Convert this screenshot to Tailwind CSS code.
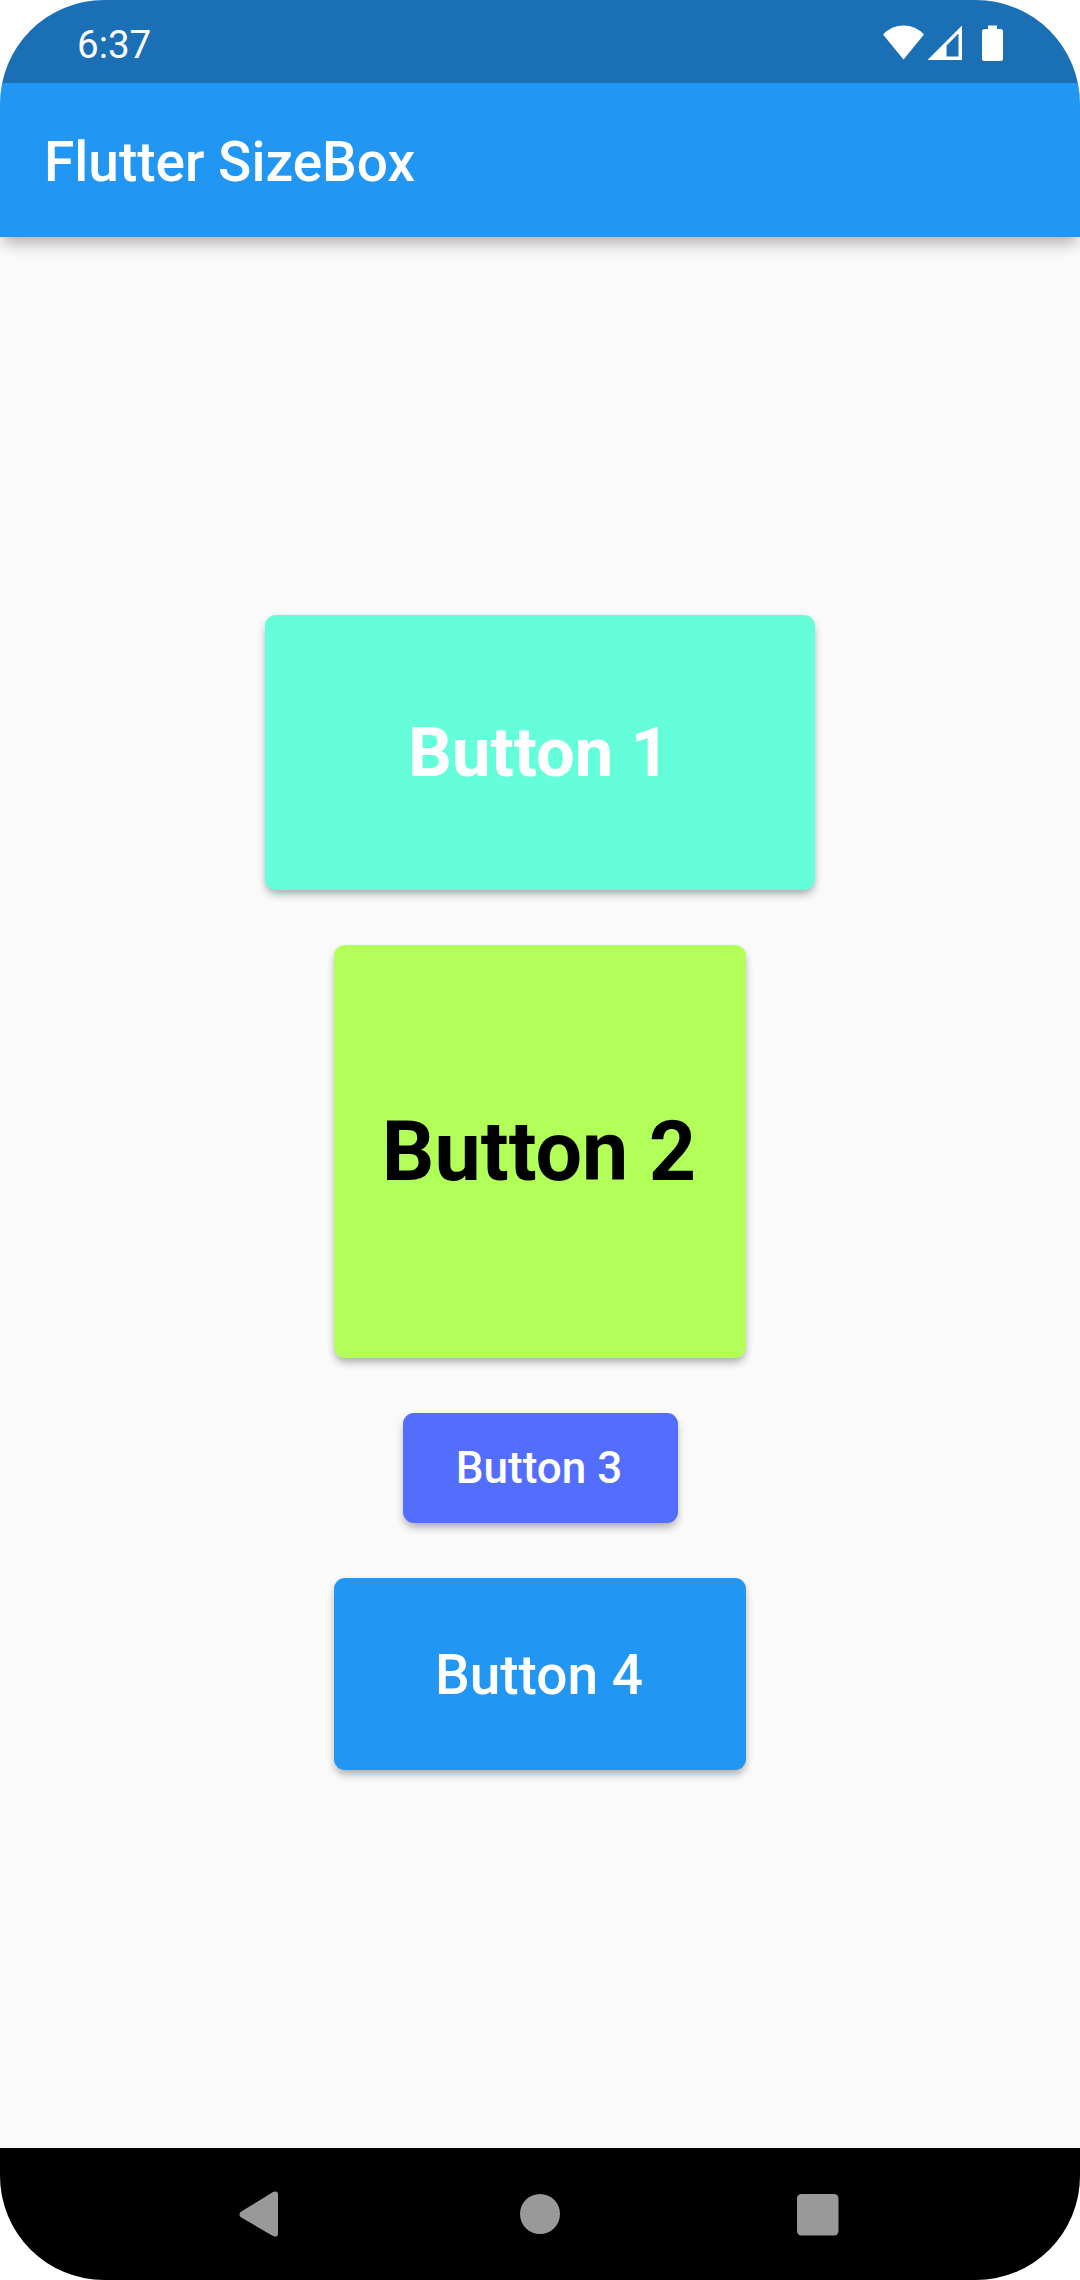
<!DOCTYPE html>
<html lang="en">
<head>
<meta charset="utf-8">
<title>Flutter SizeBox</title>
<script src="https://cdn.jsdelivr.net/npm/@tailwindcss/browser@4"></script>
</head>
<body class="bg-white">
<div class="w-[1080px] h-[2280px] rounded-[104px] overflow-hidden bg-[#fafafa] flex flex-col font-['Roboto',sans-serif]">
  <div class="relative shrink-0 shadow-[0_9px_16px_-4px_rgba(0,0,0,0.26),0_6px_16px_-2px_rgba(0,0,0,0.1)]">
    <div class="h-[83px] bg-[#1a6fb5] flex items-center justify-between pl-[77px] pr-[76px] text-white">
      <span class="text-[38.5px] leading-[46px] pt-[7px]">6:37</span>
      <svg class="w-[121px] h-[36px] mt-[3px]" viewBox="0 0 121 36" fill="#fff">
        <path d="M0 9.5Q8.500 0.500 20.500 0.500Q32.500 0.500 41 9.500L20.500 34.500Z"/>
        <path fill-rule="evenodd" d="M44.500 35L79 .5V35ZM63.500 20.500V31.500H75.500V8.500Z"/>
        <path d="M105 .5h9v3.500h3.500q2.500 0 2.500 2.500v27q0 2.500-2.500 2.500h-16q-2.500 0-2.500-2.500v-27q0-2.500 2.500-2.500h3.500z"/>
      </svg>
    </div>
    <header class="h-[154px] bg-[#2196f3] flex items-center pl-[44px] pt-[3px]">
      <h1 class="text-white text-[55px] font-medium leading-[64px]">Flutter SizeBox</h1>
    </header>
  </div>
  <main class="flex-1 flex flex-col items-center justify-center gap-[55px]">
    <button class="w-[550px] h-[275px] pr-[2px] rounded-[11px] bg-[#64ffda] text-white text-[68.75px] font-bold shadow-[0_5px_8px_-1px_rgba(0,0,0,0.33)]">Button 1</button>
    <button class="w-[412.5px] h-[412.5px] pr-[2px] pt-[2px] rounded-[11px] bg-[#b2ff59] text-black text-[82.5px] font-bold shadow-[0_5px_8px_-1px_rgba(0,0,0,0.33)]">Button 2</button>
    <button class="w-[275px] h-[110px] pr-[2px] rounded-[11px] bg-[#536dfe] text-white text-[44px] font-medium shadow-[0_5px_8px_-1px_rgba(0,0,0,0.33)]">Button 3</button>
    <button class="w-[412.5px] h-[192.5px] pr-[2px] pt-[2px] rounded-[11px] bg-[#2196f3] text-white text-[55px] font-medium shadow-[0_5px_8px_-1px_rgba(0,0,0,0.33)]">Button 4</button>
  </main>
  <nav class="h-[132px] shrink-0 bg-black flex items-center justify-between pl-[239px] pr-[241px]">
    <svg class="w-[42px] h-[46px]" viewBox="0 0 42 46" fill="#999"><path d="M1.500 21L34 1Q39 -1 39 3.500V42.500Q39 47 34 45L1.500 26Q-.5 23.500 1.500 21Z"/></svg>
    <svg class="w-[40px] h-[40px] ml-[2px]" viewBox="0 0 40 40" fill="#999"><circle cx="20" cy="20" r="20"/></svg>
    <svg class="w-[42px] h-[42px] mt-[1px]" viewBox="0 0 42 42" fill="#999"><rect width="41.500" height="41.500" rx="4.500"/></svg>
  </nav>
</div>
</body>
</html>
